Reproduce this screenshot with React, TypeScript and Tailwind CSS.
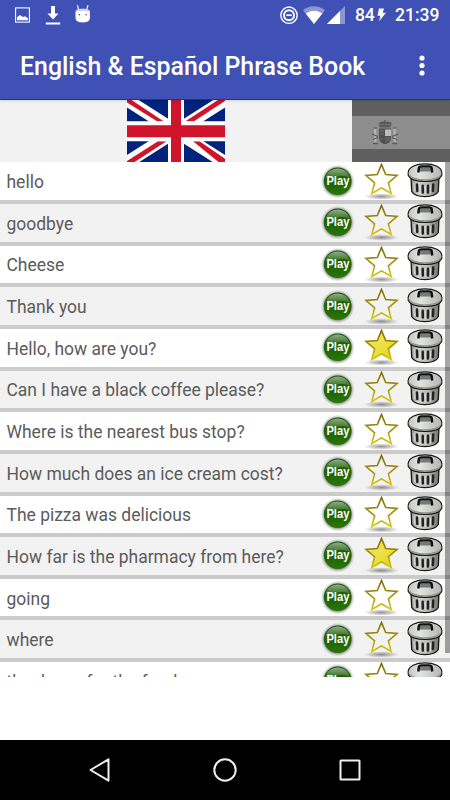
interface Phrase {
  text: string
  starred?: boolean
}

const phrases: Phrase[] = [
  { text: 'hello' },
  { text: 'goodbye' },
  { text: 'Cheese' },
  { text: 'Thank you' },
  { text: 'Hello, how are you?', starred: true },
  { text: 'Can I have a black coffee please?' },
  { text: 'Where is the nearest bus stop?' },
  { text: 'How much does an ice cream cost?' },
  { text: 'The pizza was delicious' },
  { text: 'How far is the pharmacy from here?', starred: true },
  { text: 'going' },
  { text: 'where' },
  { text: 'thank you for the food' },
]

// Gradients shared by every row's icons
function IconDefs() {
  return (
    <svg className="absolute h-0 w-0" aria-hidden="true">
      <defs>
        <radialGradient id="halo">
          <stop offset="0.76" stopColor="#333" stopOpacity="0.65" />
          <stop offset="0.9" stopColor="#555" stopOpacity="0.2" />
          <stop offset="1" stopColor="#555" stopOpacity="0" />
        </radialGradient>
        <linearGradient id="ball" x1="0" y1="0" x2="0" y2="1">
          <stop offset="0" stopColor="#1d5a0c" />
          <stop offset="0.6" stopColor="#206605" />
          <stop offset="1" stopColor="#2a7808" />
        </linearGradient>
        <linearGradient id="gloss" x1="0" y1="0" x2="0" y2="1">
          <stop offset="0" stopColor="#fff" stopOpacity="0.5" />
          <stop offset="1" stopColor="#fff" stopOpacity="0.1" />
        </linearGradient>
        <linearGradient id="starEdge" x1="0" y1="0" x2="0" y2="1">
          <stop offset="0" stopColor="#7d6c08" />
          <stop offset="0.5" stopColor="#a08c0a" />
          <stop offset="1" stopColor="#d8c90c" />
        </linearGradient>
        <linearGradient id="starFill" x1="0" y1="0" x2="1" y2="1">
          <stop offset="0" stopColor="#f2e661" />
          <stop offset="0.5" stopColor="#ede045" />
          <stop offset="1" stopColor="#e0cf18" />
        </linearGradient>
        <radialGradient id="starShadow">
          <stop offset="0" stopColor="#000" stopOpacity="0.42" />
          <stop offset="1" stopColor="#000" stopOpacity="0" />
        </radialGradient>
        <linearGradient id="can" x1="0" y1="0" x2="1" y2="0">
          <stop offset="0" stopColor="#8b8b88" />
          <stop offset="0.25" stopColor="#d2d2ce" />
          <stop offset="0.6" stopColor="#b8b8b4" />
          <stop offset="1" stopColor="#73736f" />
        </linearGradient>
        <linearGradient id="lid" x1="0" y1="0" x2="1" y2="0">
          <stop offset="0" stopColor="#c4c6c1" />
          <stop offset="0.35" stopColor="#e2e4df" />
          <stop offset="1" stopColor="#b4b6b1" />
        </linearGradient>
      </defs>
    </svg>
  )
}

function PlayIcon() {
  return (
    <svg className="h-[38px] w-[34px] shrink-0" viewBox="0 0 34 38">
      <circle cx="16.7" cy="18.6" r="17" fill="url(#halo)" />
      <circle cx="16.7" cy="18.3" r="13.8" fill="url(#ball)" />
      <path
        d="M4.600 15C6 9 10.700 5.600 16.700 5.600s10.700 3.400 12.100 9.400C24 12 14 13 4.600 15Z"
        fill="url(#gloss)"
      />
      <text
        x="16.9"
        y="22.2"
        textAnchor="middle"
        className="fill-white font-['Liberation_Sans',sans-serif] text-[12.5px] font-bold"
        textLength="23"
        lengthAdjust="spacingAndGlyphs"
      >
        Play
      </text>
    </svg>
  )
}

function StarIcon({ filled }: { filled?: boolean }) {
  return (
    <svg className="h-[38px] w-[38px] shrink-0" viewBox="0 0 38 38">
      <ellipse cx="18.5" cy="33.5" rx="17.5" ry="3.3" fill="url(#starShadow)" />
      <path
        d="M18.500 1.500 22.700 11.600 34 12.500 25.400 19.900 28.200 30.500 18.500 24.900 8.800 30.500 11.600 19.900 3 12.500 14.300 11.600Z"
        fill={filled ? 'url(#starFill)' : 'none'}
        stroke="url(#starEdge)"
        strokeWidth="1.6"
      />
    </svg>
  )
}

function TrashIcon() {
  return (
    <svg className="h-[38px] w-[36px] shrink-0" viewBox="0 0 36 38">
      <path
        d="M4 14 4.700 28.500C6.500 31.800 11 33.600 18 33.600s11.500-1.800 13.300-5.100L32 14Z"
        fill="url(#can)"
        stroke="#181818"
        strokeWidth="1.3"
      />
      <path
        d="M10 21.500l.3 6.500M15.700 22.700l.1 6.700M21 22.700l-.1 6.700M26.200 21.500l-.3 6.500"
        stroke="#222"
        strokeWidth="2.5"
        strokeLinecap="round"
      />
      <path d="M12.900 22l.1 8.500M18.400 22.500v8.500M23.600 22l-.1 8.500M7 20l.5 8" stroke="#ddd" strokeWidth="0.9" />
      <path
        d="M1.200 9.500v3C3 16.300 9.500 18.500 18 18.500s15-2.200 16.800-6v-3Z"
        fill="#a3a5a0"
        stroke="#181818"
        strokeWidth="1.1"
      />
      <ellipse cx="18" cy="8.7" rx="16.7" ry="8" fill="url(#lid)" />
      <path d="M1.300 9.500C1.300 4.500 8.500 0.900 18 0.900s16.700 3.600 16.700 8.600" fill="none" stroke="#181818" strokeWidth="1.2" />
      <path d="M2 12C5.500 15.500 11.500 16.800 18 16.800s12.500-1.300 16-4.800" fill="none" stroke="#858782" strokeWidth="0.7" />
      <path d="M12 4.500h12l1 4H11Z" fill="#777974" />
      <path
        d="M11.300 9.500 11.800 5.200C12 3.800 13 3.400 14.500 3.400h7.500c1.500 0 2.500.4 2.700 1.800l.5 4.300"
        fill="none"
        stroke="#111"
        strokeWidth="2.4"
        strokeLinejoin="round"
      />
    </svg>
  )
}

function StatusBar() {
  return (
    <div className="flex h-[31px] items-center pl-[14px] text-white">
      <svg className="h-[31px] w-[80px]" viewBox="14 0 80 31">
        <rect x="15.6" y="7.9" width="13.8" height="14.2" fill="none" stroke="#fff" strokeWidth="1.1" />
        <path d="M17 20.200v-3l3-2.200 3 2 2-.8 3 2v2Z" fill="#fff" />
        <path d="M51 6h4v7.500h3.500L53 19.500 47.500 13.500H51ZM45.800 22.400h14.400v2.200H45.800Z" fill="#fff" />
        <path
          d="M75.500 12c0-2.500 3-3.300 7.200-3.300s7.200.8 7.200 3.300v5.500c0 3.600-2.500 4.900-7.200 4.900s-7.200-1.300-7.200-4.900Z"
          fill="#fff"
        />
        <path d="M78.700 9.500 77.300 5.200M86.700 9.500 88.100 5.200" stroke="#fff" strokeWidth="1.1" />
        <path d="M76 10.800c3-1 10.400-1 13.400 0" fill="none" stroke="#c5cae9" strokeWidth="1.5" />
        <circle cx="79.3" cy="14.8" r="0.8" fill="#3f51b5" />
        <circle cx="86.1" cy="14.8" r="0.8" fill="#3f51b5" />
      </svg>
      <svg className="ml-[184px] h-[31px] w-[72px]" viewBox="278 0 72 31">
        <circle cx="289" cy="15.2" r="8.2" fill="none" stroke="#fff" strokeWidth="1.4" />
        <circle cx="289" cy="15.2" r="5" fill="none" stroke="#fff" strokeWidth="2" />
        <path d="M286.300 15.200h5.400" stroke="#fff" strokeWidth="1.7" />
        <path d="M303 10.200C309 5 319 5 325 10.200L314 24Z" fill="#fff" fillOpacity="0.4" />
        <path d="M305.700 13.600c5-3.900 11.600-3.900 16.600 0L314 24Z" fill="#fff" />
        <path d="M345 6v18H327Z" fill="#fff" fillOpacity="0.4" />
        <path d="M340 11v13H327Z" fill="#fff" />
      </svg>
      <span className="ml-[5px] w-[22px] text-[17.5px] font-medium tracking-[-0.2px]">84</span>
      <svg className="-mt-px h-[14px] w-[9px]" viewBox="0 0 9 14">
        <path d="M2 0.500h5L5.700 4.800h3.200L2.200 13.300 3.400 7.700H0.500Z" fill="#fff" />
      </svg>
      <span className="ml-[9px] text-[17.5px] font-medium">21:39</span>
    </div>
  )
}

function UnionJack() {
  return (
    <svg className="h-[62.4px] w-[98px]" viewBox="0 0 98 62" preserveAspectRatio="none">
      <path d="M0 0h98v62H0Z" fill="#00247d" />
      <path d="M0 0 98 62M98 0 0 62" stroke="#fff" strokeWidth="12.5" />
      <path
        d="M0 0v2.500L30 21h6.500L4.500 0ZM91 0h7v1L67 21h-8.500ZM98 62h-6L66 41h6.500L98 58.500ZM0 62v-1.500L31 41h8.500L7 62Z"
        fill="#cf142b"
      />
      <path d="M41 0h16v21h41v20H57v21H41V41H0V21h41Z" fill="#fff" />
      <path d="M44 0h10v25h44v12H54v25H44V37H0V25h44Z" fill="#cf142b" />
    </svg>
  )
}

function SpanishFlag() {
  return (
    <div className="flex h-[62.4px] w-[98px] flex-col bg-[#5f5f5f]">
      <div className="mt-4 h-[32.5px] bg-[#8d8d8d]">
        <svg className="ml-[20px] mt-[4px] h-[25px] w-[26px]" viewBox="0 0 26 25">
          <path d="M6.500 4.500C6 2 10 1 13 1.500s7-.5 6.500 3L18 7.500H8ZM12.300 0h1.400v3h-1.400Z" fill="#5c5c5c" />
          <path d="M7 4.500h12" stroke="#777" strokeDasharray="2 1" />
          <path d="M7 8.500h12v9c0 4-3 6.500-6 6.500s-6-2.500-6-6.500Z" fill="#505050" />
          <path d="M13 9.500h6V16h-6Z" fill="#bcbcbc" />
          <path d="M13 17h5.500c0 3-2 5-5.500 5.800Z" fill="#606060" />
          <path d="M3.300 7v15M22.700 7v15" stroke="#b5b5b5" strokeWidth="2.2" />
          <path
            d="M1.800 8h3M21.200 8h3M0 14l6 2.500M26 14l-6 2.500M1 19.500l5-2M25 19.500l-5-2M1 23.500h4.800M20.200 23.500H25"
            stroke="#5c5c5c"
            strokeWidth="1.3"
          />
          <path d="M8 11h4M8 14h4M8 19h3" stroke="#707070" />
        </svg>
      </div>
    </div>
  )
}

function PhraseRow({ phrase, shaded }: { phrase: Phrase; shaded: boolean }) {
  return (
    <li
      className={
        shaded
          ? 'flex h-[41.65px] shrink-0 items-center border-b-4 border-[#cbcbcb] bg-[#f2f2f2] pl-[6.5px] pr-[7px] pt-px'
          : 'flex h-[41.65px] shrink-0 items-center border-b-4 border-[#cbcbcb] bg-white pl-[6.5px] pr-[7px] pt-px'
      }
    >
      <span className="flex-1 whitespace-nowrap pt-px text-[17.48px] text-[#5b5b5b]">{phrase.text}</span>
      <PlayIcon />
      <span className="ml-[8px] flex">
        <StarIcon filled={phrase.starred} />
      </span>
      <span className="ml-[6px] flex">
        <TrashIcon />
      </span>
    </li>
  )
}

function NavigationBar() {
  return (
    <nav className="flex h-[60px] items-center justify-center gap-[99px] bg-black">
      <svg className="h-[26px] w-[26px]" viewBox="0 0 26 26">
        <path d="M21.500 2.300v21.400L3.500 13Z" fill="none" stroke="#eee" strokeWidth="2" strokeLinejoin="round" />
      </svg>
      <svg className="h-[26px] w-[26px]" viewBox="0 0 26 26">
        <circle cx="13" cy="13" r="10.7" fill="none" stroke="#eee" strokeWidth="2" />
      </svg>
      <svg className="h-[26px] w-[26px]" viewBox="0 0 26 26">
        <rect x="3.5" y="3.5" width="19" height="19" rx="0.5" fill="none" stroke="#eee" strokeWidth="2" />
      </svg>
    </nav>
  )
}

export default function App() {
  return (
    <div className="flex h-[800px] w-[450px] flex-col overflow-hidden bg-white font-[Roboto,sans-serif]">
      <IconDefs />
      <header className="z-10 h-[100px] shrink-0 border-b border-[#1735a0] bg-[#3f51b5] text-white shadow-sm">
        <StatusBar />
        <div className="flex h-[69px] items-center pl-5 pr-[25px]">
          <h1 className="flex-1 whitespace-nowrap pt-0.5 text-[24.9px] font-medium">English &amp; Español Phrase Book</h1>
          <svg className="h-[22px] w-[6px]" viewBox="0 0 6 22">
            <circle cx="3" cy="3" r="2.6" fill="#fff" />
            <circle cx="3" cy="10.5" r="2.6" fill="#fff" />
            <circle cx="3" cy="18" r="2.6" fill="#fff" />
          </svg>
        </div>
      </header>

      <div className="flex h-[62.4px] shrink-0">
        <div className="flex flex-1 justify-center bg-[#f2f2f2]">
          <UnionJack />
        </div>
        <SpanishFlag />
      </div>

      <div className="relative h-[515px] shrink-0 overflow-hidden">
        <ul className="flex flex-col">
          {phrases.map((phrase, i) => (
            <PhraseRow key={phrase.text} phrase={phrase} shaded={i % 2 === 1} />
          ))}
        </ul>
        <div className="absolute right-0 top-0 h-[491px] w-[5px] bg-black/35" />
      </div>

      <div className="flex-1" />
      <NavigationBar />
    </div>
  )
}
